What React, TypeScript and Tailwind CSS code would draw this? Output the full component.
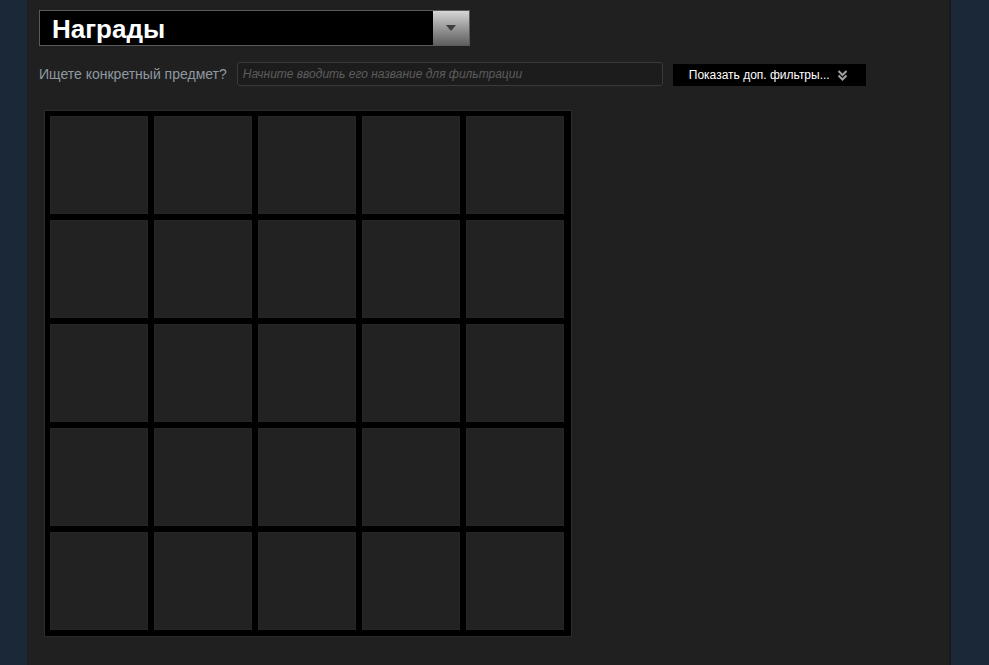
import React from "react";

export default function App() {
  const cells = Array.from({ length: 25 });
  return (
    <div className="flex min-h-screen w-full bg-[#1b2838]" style={{ fontFamily: '"Liberation Sans", Arial, sans-serif' }}>
      <div className="w-[27px] shrink-0" />
      <div className="flex w-[924px] shrink-0 flex-col border-r-2 border-[#1a1a1a] bg-[#202020] pl-[12px] pt-[10px]">
        <div className="flex h-[36px] w-[431px] border border-[#5a5a5a] bg-black">
          <div className="flex flex-1 items-center pl-[12px] pt-[1px] text-[26px] font-bold leading-none text-white">Награды</div>
          <div className="flex w-[36px] items-center justify-center bg-gradient-to-b from-[#d6d6d6] to-[#5f5f5f]">
            <svg width="12" height="8" viewBox="0 0 12 8">
              <path d="M1 1 L11 1 L6 7 Z" fill="#3e3e3e" />
            </svg>
          </div>
        </div>
        <div className="mt-[16px] flex h-[24px] items-center">
          <span className="text-[14px] text-[#8f98a0]">Ищете конкретный предмет?</span>
          <div className="ml-[10px] flex h-[24px] w-[426px] items-center rounded-[3px] border border-[#3a3a3a] bg-[#1c1c1c] pl-[5px]">
            <span className="text-[12px] italic text-[#5c5c5c]">Начните вводить его название для фильтрации</span>
          </div>
          <div className="ml-[10px] mt-[2px] flex h-[22px] w-[193px] items-center bg-black pl-[16px]">
            <span className="text-[12px] text-white">Показать доп. фильтры...</span>
            <svg className="ml-[7px]" width="11" height="11" viewBox="0 0 11 11">
              <path d="M1.5 1 L5.5 5 L9.5 1" stroke="#a0a0a0" strokeWidth="2" fill="none" />
              <path d="M1.5 5.5 L5.5 9.5 L9.5 5.5" stroke="#a0a0a0" strokeWidth="2" fill="none" />
            </svg>
          </div>
        </div>
        <div className="ml-[5px] mt-[24px] w-[528px] border border-[#2c2c2c] bg-black pb-[6px] pl-[5px] pr-[6px] pt-[5px]">
          <div className="grid grid-cols-[repeat(5,98px)] grid-rows-[repeat(5,98px)] gap-[6px]">
            {cells.map((_, i) => (
              <div key={i} className="border border-[#262626] bg-[#222222]" />
            ))}
          </div>
        </div>
      </div>
      <div className="flex-1" />
    </div>
  );
}
